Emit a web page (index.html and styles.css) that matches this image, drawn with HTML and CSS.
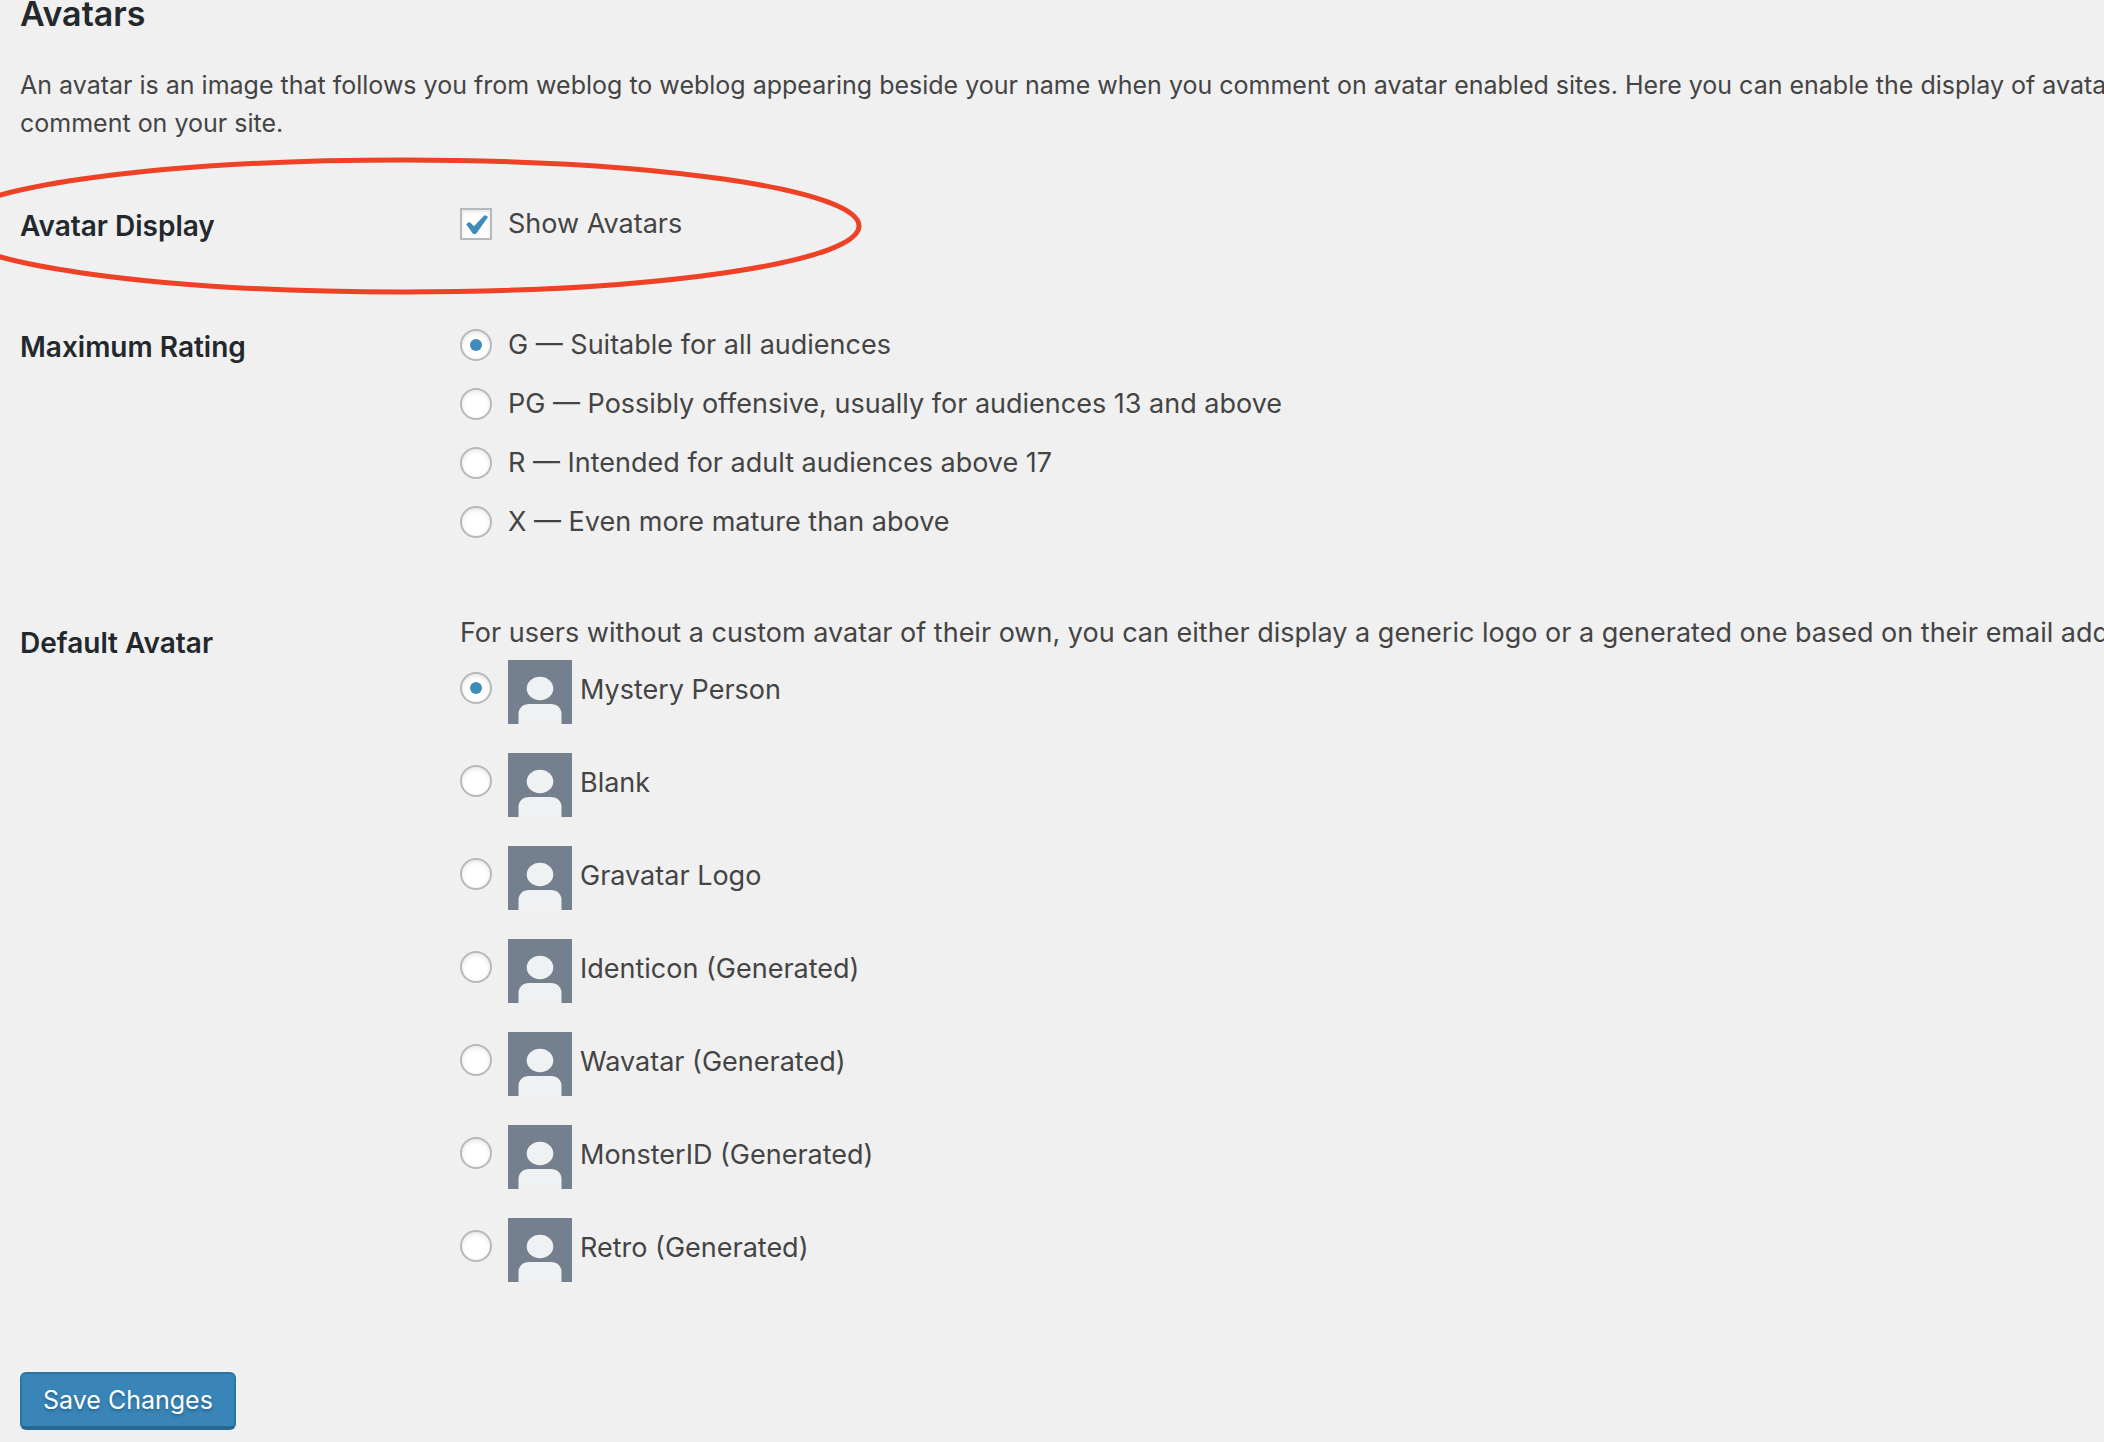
FILE: index.html
```html
<!DOCTYPE html>
<html lang="en">
<head>
    <meta charset="UTF-8">
    <meta name="viewport" content="width=device-width, initial-scale=1.0">
    <title>Discussion Settings</title>
    <link rel="stylesheet" href="styles.css">
</head>
<body>

    <!-- shared avatar picture -->
    <svg class="sprite" aria-hidden="true">
        <symbol id="person" viewBox="0 0 64 64">
            <rect width="64" height="64" fill="#74808e"/>
            <ellipse cx="32" cy="28.5" rx="13.3" ry="11.7" fill="#f0f1f3"/>
            <path d="M10.5 64V54C10.5 48 15 44 21 44H43C49 44 53.5 48 53.5 54V64Z" fill="#f0f1f3"/>
        </symbol>
    </svg>

    <form class="settings">
        <h2 class="title">Avatars</h2>
        <p class="intro">An avatar is an image that follows you from weblog to weblog appearing beside your name when you comment on avatar enabled sites. Here you can enable the display of avatars for people who<br>comment on your site.</p>

        <div class="row" role="group" aria-labelledby="display-title">
            <h3 class="row-title" id="display-title">Avatar Display</h3>
            <div class="options">
                <label class="option"><input type="checkbox" class="check" name="show_avatars" checked><span>Show Avatars</span></label>
            </div>
            <svg class="marker" viewBox="0 0 918 138" aria-hidden="true">
                <ellipse cx="459" cy="69" rx="456" ry="66" fill="none" stroke="#ee4126" stroke-width="5"/>
            </svg>
        </div>

        <div class="row" role="group" aria-labelledby="rating-title">
            <h3 class="row-title" id="rating-title">Maximum Rating</h3>
            <div class="options">
                <label class="option"><input type="radio" class="radio" name="rating" value="G" checked><span>G — Suitable for all audiences</span></label>
                <label class="option"><input type="radio" class="radio" name="rating" value="PG"><span>PG — Possibly offensive, usually for audiences 13 and above</span></label>
                <label class="option"><input type="radio" class="radio" name="rating" value="R"><span>R — Intended for adult audiences above 17</span></label>
                <label class="option"><input type="radio" class="radio" name="rating" value="X"><span>X — Even more mature than above</span></label>
            </div>
        </div>

        <div class="row" role="group" aria-labelledby="default-title">
            <h3 class="row-title" id="default-title">Default Avatar</h3>
            <div class="defaults">
                <p class="description">For users without a custom avatar of their own, you can either display a generic logo or a generated one based on their email address.</p>
                <div class="avatars">
                    <label class="avatar"><input type="radio" class="radio" name="avatar" value="mystery" checked><svg class="picture"><use href="#person"/></svg><span class="name">Mystery Person</span></label>
                    <label class="avatar"><input type="radio" class="radio" name="avatar" value="blank"><svg class="picture"><use href="#person"/></svg><span class="name">Blank</span></label>
                    <label class="avatar"><input type="radio" class="radio" name="avatar" value="gravatar"><svg class="picture"><use href="#person"/></svg><span class="name">Gravatar Logo</span></label>
                    <label class="avatar"><input type="radio" class="radio" name="avatar" value="identicon"><svg class="picture"><use href="#person"/></svg><span class="name">Identicon (Generated)</span></label>
                    <label class="avatar"><input type="radio" class="radio" name="avatar" value="wavatar"><svg class="picture"><use href="#person"/></svg><span class="name">Wavatar (Generated)</span></label>
                    <label class="avatar"><input type="radio" class="radio" name="avatar" value="monsterid"><svg class="picture"><use href="#person"/></svg><span class="name">MonsterID (Generated)</span></label>
                    <label class="avatar"><input type="radio" class="radio" name="avatar" value="retro"><svg class="picture"><use href="#person"/></svg><span class="name">Retro (Generated)</span></label>
                </div>
            </div>
        </div>

        <button type="button" class="save">Save Changes</button>
    </form>

</body>
</html>
```
FILE: styles.css
```css
* {
    box-sizing: border-box;
}

body {
    margin: 0;
    background-color: #f0f0f0;
    color: #444;
    font-family: Inter, "Liberation Sans", sans-serif;
    font-size: 27px;
    line-height: 36px;
    overflow: hidden;
}

.sprite {
    display: none;
}

.settings {
    padding: 0 20px 12px;
}

.title {
    margin: 0 0 38px;
    color: #23282d;
    font-size: 34px;
    font-weight: 600;
    line-height: 28px;
}

.intro {
    margin: 0 0 64px;
    font-size: 25px;
    line-height: 38px;
    white-space: nowrap;
}

.row {
    display: grid;
    grid-template-columns: 440px 1fr;
    position: relative;
    margin-bottom: 83px;
}

.row-title {
    margin: 0;
    padding-top: 2px;
    color: #23282d;
    font-size: 28px;
    font-weight: 600;
}

.options {
    display: flex;
    flex-direction: column;
    align-items: flex-start;
    gap: 23px;
}

.option {
    display: flex;
    align-items: center;
    gap: 16px;
}

.check,
.radio {
    appearance: none;
    display: flex;
    align-items: center;
    justify-content: center;
    flex: none;
    width: 32px;
    height: 32px;
    margin: 0;
    border: 2px solid #b4b9be;
    background-color: #fff;
    box-shadow: inset 0 2px 4px rgba(0, 0, 0, 0.1);
}

.radio {
    border-radius: 50%;
}

.radio:checked::before {
    content: "";
    width: 12px;
    height: 12px;
    border-radius: 50%;
    background-color: #3f8bba;
}

.check:checked::before {
    content: "";
    width: 28px;
    height: 28px;
    background-color: #3f8bba;
    clip-path: polygon(15% 51%, 23% 44%, 29% 45%, 43% 58%, 79% 20%, 84% 19%, 93% 25%, 52% 83%, 46% 87%, 39% 85%);
}

/* red ring round the first setting */
.marker {
    position: absolute;
    top: -49px;
    left: -76px;
    width: 918px;
    height: 138px;
    pointer-events: none;
}

.description {
    margin: -8px 0 9px;
    white-space: nowrap;
}

.avatars {
    display: flex;
    flex-direction: column;
    align-items: flex-start;
    gap: 29px;
}

.avatar {
    display: flex;
    align-items: center;
}

.avatar .radio {
    margin: 0 16px 8px 0;
}

.picture {
    width: 64px;
    height: 64px;
    margin-right: 8px;
}

.name {
    margin-bottom: 4px;
}

.save {
    display: block;
    margin-top: 90px;
    height: 58px;
    padding: 0 21px;
    border: 2px solid #2e73a5;
    border-bottom: 4px solid #286896;
    border-radius: 6px;
    background-color: #3a85b7;
    color: #fff;
    font-family: inherit;
    font-size: 25px;
    line-height: 36px;
    text-shadow: 0 2px 3px #22618f;
    cursor: pointer;
}
```
